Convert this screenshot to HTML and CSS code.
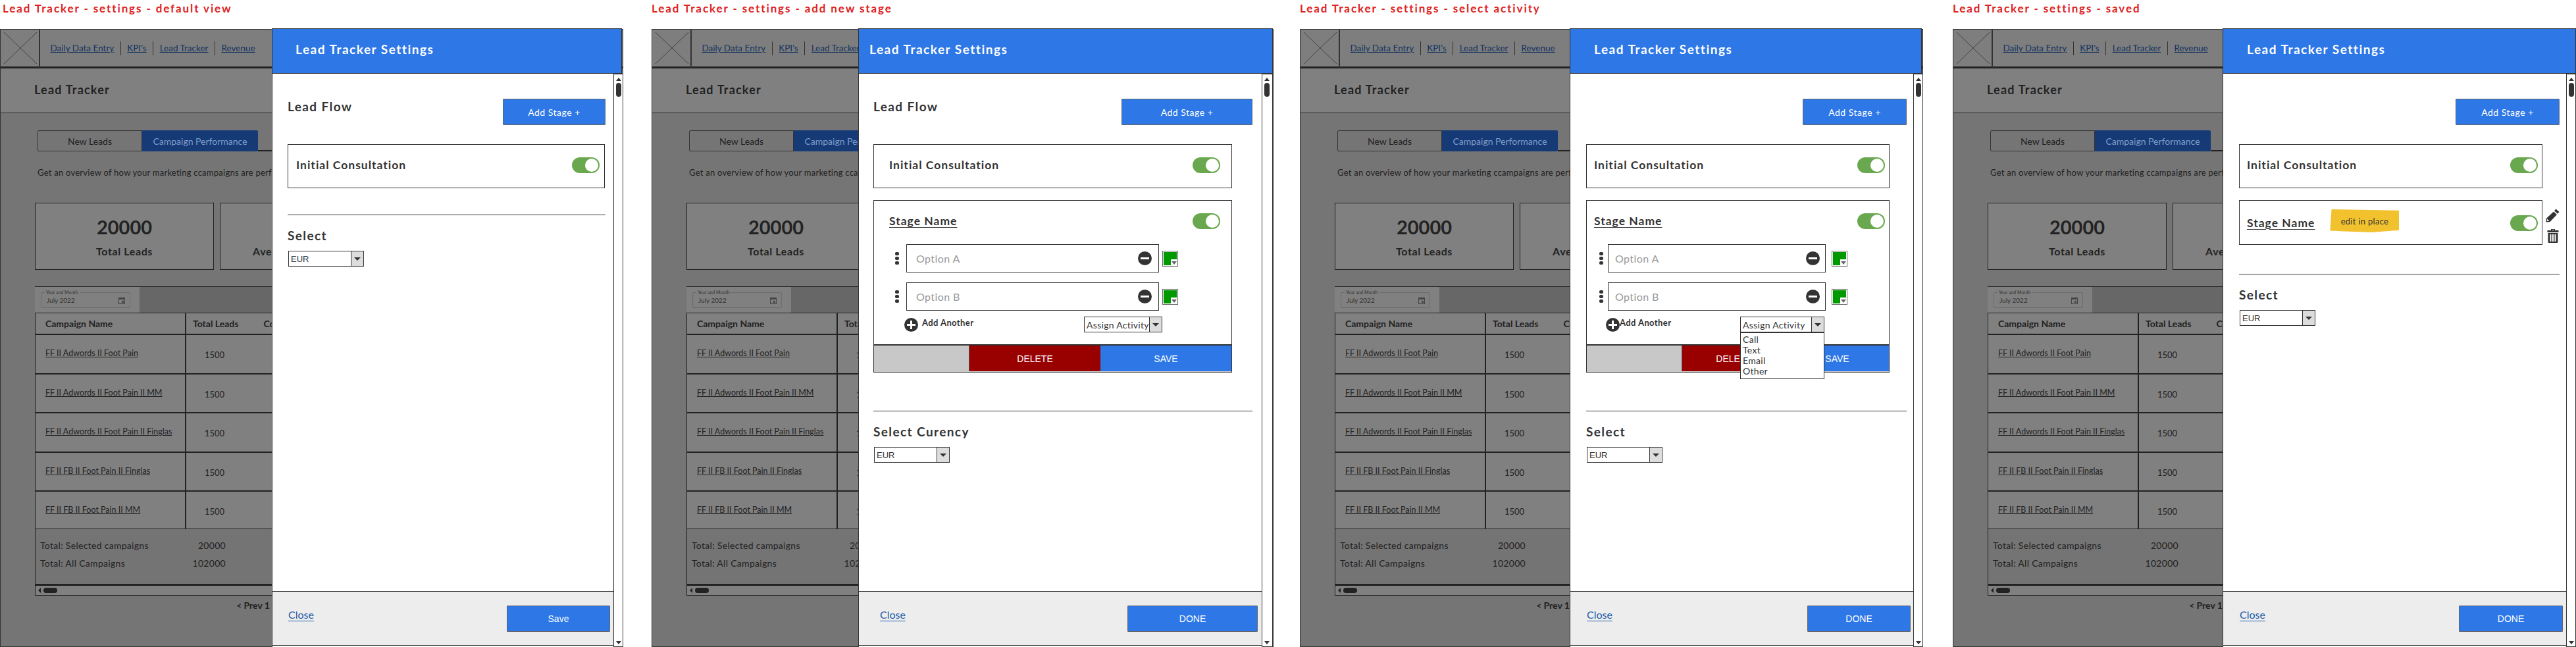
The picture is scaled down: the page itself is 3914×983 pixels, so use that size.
FILE: index.html
```html
<!DOCTYPE html>
<html lang="en">
  <head>
    <meta charset="UTF-8" />
    <title>Lead Tracker - settings</title>
    <link rel="stylesheet" href="styles.css">
  </head>
  <body>
    <div class="board">

      <!-- default view -->
      <section class="frame f1">
        <h2 class="caption">Lead Tracker - settings - default view</h2>
        <div class="window">
          <div class="wire">
            <nav class="wire-nav">
              <span class="logo"><svg viewBox="0 0 60 59" width="60" height="59"><path d="M5 5 L55 53 M55 5 L5 53" /></svg></span>
              <a class="nav-link">Daily Data Entry</a><i class="nav-sep"></i>
              <a class="nav-link">KPI's</a><i class="nav-sep"></i>
              <a class="nav-link">Lead Tracker</a><i class="nav-sep"></i>
              <a class="nav-link">Revenue</a>
            </nav>
            <h1 class="wire-title">Lead Tracker</h1>
            <main class="wire-main">
              <div class="tabs"><span class="tab">New Leads</span><span class="tab tab-on">Campaign Performance</span><span class="tab-rest"></span></div>
              <p class="intro">Get an overview of how your marketing ccampaigns are performing across every channel</p>
              <div class="stats">
                <div class="stat"><b>20000</b><span>Total Leads</span></div>
                <div class="stat"><b>120</b><span>Average Cost per Lead</span></div>
              </div>
              <div class="date-band">
                <div class="date-field"><span class="date-legend">Year and Month</span>July 2022<svg class="cal" viewBox="0 0 10 11" width="10" height="11"><path d="M0 1h10v10H0z M1 4v6h8V4z M5 6h3v3H5z" fill-rule="evenodd" /></svg></div>
              </div>
              <div class="table">
                <div class="t-row t-head"><span class="t-name">Campaign Name</span><span class="t-col"><span>Total Leads</span><span class="t-cost">Cost</span></span></div>
                <div class="t-row"><span class="t-name"><a>FF II Adwords II Foot Pain</a></span><span class="t-col t-num">1500</span></div>
                <div class="t-row"><span class="t-name"><a>FF II Adwords II Foot Pain II MM</a></span><span class="t-col t-num">1500</span></div>
                <div class="t-row"><span class="t-name"><a>FF II Adwords II Foot Pain II Finglas</a></span><span class="t-col t-num">1500</span></div>
                <div class="t-row"><span class="t-name"><a>FF II FB II Foot Pain II Finglas</a></span><span class="t-col t-num">1500</span></div>
                <div class="t-row t-last"><span class="t-name"><a>FF II FB II Foot Pain II MM</a></span><span class="t-col t-num">1500</span></div>
                <div class="totals">
                  <div class="total"><span>Total: Selected campaigns</span><span>20000</span></div>
                  <div class="total"><span>Total: All Campaigns</span><span>102000</span></div>
                </div>
                <div class="h-scroll"><i class="h-arrow"></i><i class="h-thumb"></i></div>
              </div>
              <p class="pager">&lt; Prev 1 of 5 Next &gt;</p>
            </main>
          </div>
          <aside class="modal">
            <header class="modal-head">Lead Tracker Settings</header>
            <div class="modal-mid">
              <div class="modal-body">
                <div class="flow-row">
                  <h3 class="label">Lead Flow</h3>
                  <button class="btn btn-add">Add Stage +</button>
                </div>
                <div class="stage-card"><div class="stage-top"><span class="stage-title">Initial Consultation</span><span class="toggle"></span></div></div>
                <hr class="rule" />
                <h3 class="label">Select</h3>
                <div class="drop drop-eur"><span>EUR</span><i class="drop-arrow"></i></div>
              </div>
              <div class="v-scroll"><i class="v-up"></i><i class="v-thumb"></i><i class="v-down"></i></div>
            </div>
            <footer class="modal-foot"><a class="close-link">Close</a><button class="btn btn-done">Save</button></footer>
          </aside>
        </div>
      </section>

      <!-- add new stage -->
      <section class="frame f2">
        <h2 class="caption">Lead Tracker - settings - add new stage</h2>
        <div class="window">
          <div class="wire">
            <nav class="wire-nav">
              <span class="logo"><svg viewBox="0 0 60 59" width="60" height="59"><path d="M5 5 L55 53 M55 5 L5 53" /></svg></span>
              <a class="nav-link">Daily Data Entry</a><i class="nav-sep"></i>
              <a class="nav-link">KPI's</a><i class="nav-sep"></i>
              <a class="nav-link">Lead Tracker</a><i class="nav-sep"></i>
              <a class="nav-link">Revenue</a>
            </nav>
            <h1 class="wire-title">Lead Tracker</h1>
            <main class="wire-main">
              <div class="tabs"><span class="tab">New Leads</span><span class="tab tab-on">Campaign Performance</span><span class="tab-rest"></span></div>
              <p class="intro">Get an overview of how your marketing ccampaigns are performing across every channel</p>
              <div class="stats">
                <div class="stat"><b>20000</b><span>Total Leads</span></div>
                <div class="stat"><b>120</b><span>Average Cost per Lead</span></div>
              </div>
              <div class="date-band">
                <div class="date-field"><span class="date-legend">Year and Month</span>July 2022<svg class="cal" viewBox="0 0 10 11" width="10" height="11"><path d="M0 1h10v10H0z M1 4v6h8V4z M5 6h3v3H5z" fill-rule="evenodd" /></svg></div>
              </div>
              <div class="table">
                <div class="t-row t-head"><span class="t-name">Campaign Name</span><span class="t-col"><span>Total Leads</span><span class="t-cost">Cost</span></span></div>
                <div class="t-row"><span class="t-name"><a>FF II Adwords II Foot Pain</a></span><span class="t-col t-num">1500</span></div>
                <div class="t-row"><span class="t-name"><a>FF II Adwords II Foot Pain II MM</a></span><span class="t-col t-num">1500</span></div>
                <div class="t-row"><span class="t-name"><a>FF II Adwords II Foot Pain II Finglas</a></span><span class="t-col t-num">1500</span></div>
                <div class="t-row"><span class="t-name"><a>FF II FB II Foot Pain II Finglas</a></span><span class="t-col t-num">1500</span></div>
                <div class="t-row t-last"><span class="t-name"><a>FF II FB II Foot Pain II MM</a></span><span class="t-col t-num">1500</span></div>
                <div class="totals">
                  <div class="total"><span>Total: Selected campaigns</span><span>20000</span></div>
                  <div class="total"><span>Total: All Campaigns</span><span>102000</span></div>
                </div>
                <div class="h-scroll"><i class="h-arrow"></i><i class="h-thumb"></i></div>
              </div>
              <p class="pager">&lt; Prev 1 of 5 Next &gt;</p>
            </main>
          </div>
          <aside class="modal">
            <header class="modal-head">Lead Tracker Settings</header>
            <div class="modal-mid">
              <div class="modal-body">
                <div class="flow-row">
                  <h3 class="label">Lead Flow</h3>
                  <button class="btn btn-add">Add Stage +</button>
                </div>
                <div class="stage-card"><div class="stage-top"><span class="stage-title">Initial Consultation</span><span class="toggle"></span></div></div>
                <div class="stage-card stage-open">
                  <div class="stage-top"><a class="stage-title stage-name">Stage Name</a><span class="toggle"></span></div>
                  <div class="option"><span class="dots"><i></i><i></i><i></i></span><span class="opt-input">Option A<i class="minus"></i></span><span class="swatch"><i></i></span></div>
                  <div class="option"><span class="dots"><i></i><i></i><i></i></span><span class="opt-input">Option B<i class="minus"></i></span><span class="swatch"><i></i></span></div>
                  <div class="add-row">
                    <span class="add-another"><i class="plus"></i><b>Add Another</b></span>
                    <div class="drop drop-assign"><span>Assign Activity</span><i class="drop-arrow"></i></div>
                  </div>
                  <div class="stage-bar"><span class="bar-blank"></span><button class="bar-btn bar-del">DELETE</button><button class="bar-btn bar-save">SAVE</button></div>
                </div>
                <hr class="rule" />
                <h3 class="label">Select Curency</h3>
                <div class="drop drop-eur"><span>EUR</span><i class="drop-arrow"></i></div>
              </div>
              <div class="v-scroll"><i class="v-up"></i><i class="v-thumb"></i><i class="v-down"></i></div>
            </div>
            <footer class="modal-foot"><a class="close-link">Close</a><button class="btn btn-done">DONE</button></footer>
          </aside>
        </div>
      </section>

      <!-- select activity -->
      <section class="frame f3">
        <h2 class="caption">Lead Tracker - settings - select activity</h2>
        <div class="window">
          <div class="wire">
            <nav class="wire-nav">
              <span class="logo"><svg viewBox="0 0 60 59" width="60" height="59"><path d="M5 5 L55 53 M55 5 L5 53" /></svg></span>
              <a class="nav-link">Daily Data Entry</a><i class="nav-sep"></i>
              <a class="nav-link">KPI's</a><i class="nav-sep"></i>
              <a class="nav-link">Lead Tracker</a><i class="nav-sep"></i>
              <a class="nav-link">Revenue</a>
            </nav>
            <h1 class="wire-title">Lead Tracker</h1>
            <main class="wire-main">
              <div class="tabs"><span class="tab">New Leads</span><span class="tab tab-on">Campaign Performance</span><span class="tab-rest"></span></div>
              <p class="intro">Get an overview of how your marketing ccampaigns are performing across every channel</p>
              <div class="stats">
                <div class="stat"><b>20000</b><span>Total Leads</span></div>
                <div class="stat"><b>120</b><span>Average Cost per Lead</span></div>
              </div>
              <div class="date-band">
                <div class="date-field"><span class="date-legend">Year and Month</span>July 2022<svg class="cal" viewBox="0 0 10 11" width="10" height="11"><path d="M0 1h10v10H0z M1 4v6h8V4z M5 6h3v3H5z" fill-rule="evenodd" /></svg></div>
              </div>
              <div class="table">
                <div class="t-row t-head"><span class="t-name">Campaign Name</span><span class="t-col"><span>Total Leads</span><span class="t-cost">Cost</span></span></div>
                <div class="t-row"><span class="t-name"><a>FF II Adwords II Foot Pain</a></span><span class="t-col t-num">1500</span></div>
                <div class="t-row"><span class="t-name"><a>FF II Adwords II Foot Pain II MM</a></span><span class="t-col t-num">1500</span></div>
                <div class="t-row"><span class="t-name"><a>FF II Adwords II Foot Pain II Finglas</a></span><span class="t-col t-num">1500</span></div>
                <div class="t-row"><span class="t-name"><a>FF II FB II Foot Pain II Finglas</a></span><span class="t-col t-num">1500</span></div>
                <div class="t-row t-last"><span class="t-name"><a>FF II FB II Foot Pain II MM</a></span><span class="t-col t-num">1500</span></div>
                <div class="totals">
                  <div class="total"><span>Total: Selected campaigns</span><span>20000</span></div>
                  <div class="total"><span>Total: All Campaigns</span><span>102000</span></div>
                </div>
                <div class="h-scroll"><i class="h-arrow"></i><i class="h-thumb"></i></div>
              </div>
              <p class="pager">&lt; Prev 1 of 5 Next &gt;</p>
            </main>
          </div>
          <aside class="modal">
            <header class="modal-head">Lead Tracker Settings</header>
            <div class="modal-mid">
              <div class="modal-body">
                <div class="flow-row">
                  <button class="btn btn-add">Add Stage +</button>
                </div>
                <div class="stage-card"><div class="stage-top"><span class="stage-title">Initial Consultation</span><span class="toggle"></span></div></div>
                <div class="stage-card stage-open">
                  <div class="stage-top"><a class="stage-title stage-name">Stage Name</a><span class="toggle"></span></div>
                  <div class="option"><span class="dots"><i></i><i></i><i></i></span><span class="opt-input">Option A<i class="minus"></i></span><span class="swatch"><i></i></span></div>
                  <div class="option"><span class="dots"><i></i><i></i><i></i></span><span class="opt-input">Option B<i class="minus"></i></span><span class="swatch"><i></i></span></div>
                  <div class="add-row">
                    <span class="add-another"><i class="plus"></i><b>Add Another</b></span>
                    <div class="drop drop-assign"><span>Assign Activity</span><i class="drop-arrow"></i>
                      <ul class="drop-menu"><li>Call</li><li>Text</li><li>Email</li><li>Other</li></ul>
                    </div>
                  </div>
                  <div class="stage-bar"><span class="bar-blank"></span><button class="bar-btn bar-del">DELETE</button><button class="bar-btn bar-save">SAVE</button></div>
                </div>
                <hr class="rule" />
                <h3 class="label">Select</h3>
                <div class="drop drop-eur"><span>EUR</span><i class="drop-arrow"></i></div>
              </div>
              <div class="v-scroll"><i class="v-up"></i><i class="v-thumb"></i><i class="v-down"></i></div>
            </div>
            <footer class="modal-foot"><a class="close-link">Close</a><button class="btn btn-done">DONE</button></footer>
          </aside>
        </div>
      </section>

      <!-- saved -->
      <section class="frame f4">
        <h2 class="caption">Lead Tracker - settings - saved</h2>
        <div class="window">
          <div class="wire">
            <nav class="wire-nav">
              <span class="logo"><svg viewBox="0 0 60 59" width="60" height="59"><path d="M5 5 L55 53 M55 5 L5 53" /></svg></span>
              <a class="nav-link">Daily Data Entry</a><i class="nav-sep"></i>
              <a class="nav-link">KPI's</a><i class="nav-sep"></i>
              <a class="nav-link">Lead Tracker</a><i class="nav-sep"></i>
              <a class="nav-link">Revenue</a>
            </nav>
            <h1 class="wire-title">Lead Tracker</h1>
            <main class="wire-main">
              <div class="tabs"><span class="tab">New Leads</span><span class="tab tab-on">Campaign Performance</span><span class="tab-rest"></span></div>
              <p class="intro">Get an overview of how your marketing ccampaigns are performing across every channel</p>
              <div class="stats">
                <div class="stat"><b>20000</b><span>Total Leads</span></div>
                <div class="stat"><b>120</b><span>Average Cost per Lead</span></div>
              </div>
              <div class="date-band">
                <div class="date-field"><span class="date-legend">Year and Month</span>July 2022<svg class="cal" viewBox="0 0 10 11" width="10" height="11"><path d="M0 1h10v10H0z M1 4v6h8V4z M5 6h3v3H5z" fill-rule="evenodd" /></svg></div>
              </div>
              <div class="table">
                <div class="t-row t-head"><span class="t-name">Campaign Name</span><span class="t-col"><span>Total Leads</span><span class="t-cost">Cost</span></span></div>
                <div class="t-row"><span class="t-name"><a>FF II Adwords II Foot Pain</a></span><span class="t-col t-num">1500</span></div>
                <div class="t-row"><span class="t-name"><a>FF II Adwords II Foot Pain II MM</a></span><span class="t-col t-num">1500</span></div>
                <div class="t-row"><span class="t-name"><a>FF II Adwords II Foot Pain II Finglas</a></span><span class="t-col t-num">1500</span></div>
                <div class="t-row"><span class="t-name"><a>FF II FB II Foot Pain II Finglas</a></span><span class="t-col t-num">1500</span></div>
                <div class="t-row t-last"><span class="t-name"><a>FF II FB II Foot Pain II MM</a></span><span class="t-col t-num">1500</span></div>
                <div class="totals">
                  <div class="total"><span>Total: Selected campaigns</span><span>20000</span></div>
                  <div class="total"><span>Total: All Campaigns</span><span>102000</span></div>
                </div>
                <div class="h-scroll"><i class="h-arrow"></i><i class="h-thumb"></i></div>
              </div>
              <p class="pager">&lt; Prev 1 of 5 Next &gt;</p>
            </main>
          </div>
          <aside class="modal">
            <header class="modal-head">Lead Tracker Settings</header>
            <div class="modal-mid">
              <div class="modal-body">
                <div class="flow-row">
                  <button class="btn btn-add">Add Stage +</button>
                </div>
                <div class="stage-card"><div class="stage-top"><span class="stage-title">Initial Consultation</span><span class="toggle"></span></div></div>
                <div class="saved-row">
                  <div class="stage-card"><div class="stage-top"><a class="stage-title stage-name">Stage Name</a><span class="sticky">edit in place</span><span class="toggle"></span></div></div>
                  <div class="stage-tools">
                    <svg viewBox="0 0 21 21" width="21" height="21"><path d="M15.5 0.5 L20.5 5 L18 7.8 L13 3.2 Z M12 4.4 L17 9 L6.5 20 L0.5 20.5 L1 14.8 Z M2.2 15.6 L2 19 L5.4 18.7 Z" fill-rule="evenodd" /></svg>
                    <svg viewBox="0 0 18 21" width="18" height="21"><path d="M6 0h6v2h5.5v3H0.5V2H6z M7.5 1v1h3V1z M1.5 6h15v13.5a1.5 1.5 0 0 1-1.5 1.5H3a1.5 1.5 0 0 1-1.5-1.5z M4.5 8v11h2V8z M8 8v11h2V8z M11.5 8v11h2V8z" fill-rule="evenodd" /></svg>
                  </div>
                </div>
                <hr class="rule" />
                <h3 class="label">Select</h3>
                <div class="drop drop-eur"><span>EUR</span><i class="drop-arrow"></i></div>
              </div>
              <div class="v-scroll"><i class="v-up"></i><i class="v-thumb"></i><i class="v-down"></i></div>
            </div>
            <footer class="modal-foot"><a class="close-link">Close</a><button class="btn btn-done">DONE</button></footer>
          </aside>
        </div>
      </section>

    </div>
  </body>
</html>
```
FILE: styles.css
```css
* {
  box-sizing: border-box;
}
body {
  margin: 0;
  background: white;
  font-family: Lato, "Open Sans", sans-serif;
  color: #333;
  overflow: hidden;
}
h1, h2, h3, p, ul {
  margin: 0;
  padding: 0;
  font-size: inherit;
}
button {
  font-family: inherit;
  cursor: pointer;
}
i {
  font-style: normal;
}

/* the four screens, side by side */
.board {
  display: flex;
  width: 3914px;
  height: 983px;
}
.frame {
  flex: none;
  display: flex;
  flex-direction: column;
  --scroll-w: 15px;
}
.f1 {
  width: 990px;
  --wire-w: 947px;
  --modal-left: 413px;
  --modal-w: 534px;
  --head-gap: 2px;
  --head-x: 35px;
  --body-x: 24px;
  --scroll-gap: 12px;
  --add-w: 156px;
  --card-w: 482px;
  --card-l: 12px;
  --card-r: 7px;
  --rule-gap: 40px;
  --foot-x: 24px;
  --done-w: 157px;
  --foot-r: 5px;
}
.f2 {
  width: 985px;
  --wire-w: 945px;
  --modal-left: 314px;
  --modal-w: 630px;
  --scroll-w: 17px;
  --head-gap: 0px;
  --head-x: 16px;
  --body-x: 23px;
  --scroll-gap: 14px;
  --add-w: 199px;
  --card-w: 545px;
  --card-l: 23px;
  --card-r: 17px;
  --rule-gap: 58px;
  --foot-x: 32px;
  --done-w: 198px;
  --foot-r: 6px;
  --dots-x: 32px;
  --opt-w: 384px;
  --opt-pad: 14px;
  --minus-r: 10px;
  --swatch-gap: 5px;
  --add-x: 47px;
  --add-end: 438px;
  --add-gap: 6px;
  --assign-w: 119px;
}
.f3 {
  width: 992px;
  --wire-w: 947px;
  --modal-left: 410px;
  --modal-w: 537px;
  --head-gap: 2px;
  --head-x: 36px;
  --body-x: 25px;
  --scroll-gap: 10px;
  --add-w: 158px;
  --card-w: 461px;
  --card-l: 11px;
  --card-r: 6px;
  --rule-gap: 58px;
  --foot-x: 25px;
  --done-w: 157px;
  --foot-r: 4px;
  --dots-x: 19px;
  --opt-w: 331px;
  --opt-pad: 10px;
  --minus-r: 8px;
  --swatch-gap: 9px;
  --add-x: 30px;
  --add-end: 361px;
  --add-gap: 0px;
  --assign-w: 128px;
}
.f4 {
  width: 947px;
  --wire-w: 947px;
  --modal-left: 410px;
  --modal-w: 537px;
  --head-gap: 0px;
  --head-x: 36px;
  --body-x: 25px;
  --scroll-gap: 10px;
  --add-w: 158px;
  --card-w: 461px;
  --card-l: 11px;
  --card-r: 6px;
  --rule-gap: 44px;
  --foot-x: 25px;
  --done-w: 158px;
  --foot-r: 5px;
}
.caption {
  height: 44px;
  padding-top: 3px;
  line-height: 20px;
  font-size: 17px;
  font-weight: 700;
  letter-spacing: 1.9px;
  color: #dd2222;
  white-space: nowrap;
}
.f1 .caption {
  padding-left: 4px;
}
.window {
  position: relative;
  width: var(--wire-w);
  height: 939px;
}

/* dimmed page behind the drawer */
.wire {
  width: 100%;
  height: 100%;
  overflow: hidden;
  display: flex;
  flex-direction: column;
  background: #757575;
  border: 1px solid #333;
  color: #222;
}
.wire-nav {
  flex: none;
  display: flex;
  align-items: center;
  gap: 9.5px;
  height: 59px;
  background: #7e7e7e;
  border-bottom: 3px solid #222;
  font-size: 13.5px;
}
.logo {
  flex: none;
  width: 60px;
  height: 59px;
  margin-right: 6px;
  border-right: 2px solid #333;
}
.logo svg {
  display: block;
  fill: none;
  stroke: #333;
  stroke-width: 0.8;
}
.nav-link {
  color: #14335f;
  text-decoration: underline;
  white-space: nowrap;
}
.nav-sep {
  width: 1px;
  height: 21px;
  background: #333;
}
.wire-title {
  flex: none;
  height: 68px;
  padding: 20px 0 0 51px;
  line-height: 24px;
  font-size: 18px;
  font-weight: 700;
  letter-spacing: 1.2px;
  background: #808080;
  border-bottom: 1px solid #2a2a2a;
}
.wire-main {
  flex: 1;
  min-height: 0;
  padding: 26px 0 0 52px;
  white-space: nowrap;
}
.tabs {
  display: flex;
  height: 32px;
  margin-left: 4px;
  font-size: 14px;
}
.tab {
  flex: none;
  width: 159px;
  display: flex;
  align-items: center;
  justify-content: center;
  border: 1px solid #333;
  border-radius: 2px 0 0 2px;
  background: #757575;
}
.tab-on {
  width: 176px;
  border: 0;
  border-radius: 0 2px 2px 0;
  background: #153a75;
  color: #7f9ccb;
}
.tab-rest {
  flex: 1;
  border-bottom: 2px solid #222;
}
.intro {
  margin: 22px 0 0 4px;
  line-height: 20px;
  font-size: 13px;
  letter-spacing: 0.25px;
}
.stats {
  display: flex;
  gap: 9px;
  margin-top: 36px;
}
.stat {
  flex: none;
  width: 272px;
  height: 102px;
  display: flex;
  flex-direction: column;
  align-items: center;
  background: #808080;
  border: 1px solid #222;
  padding-top: 18px;
}
.stat b {
  line-height: 36px;
  font-size: 29px;
}
.stat span {
  margin-top: 9px;
  line-height: 20px;
  font-size: 16px;
  font-weight: 700;
  letter-spacing: 0.6px;
}
.date-band {
  height: 40px;
  margin-top: 25px;
  padding: 8px 0 0 9px;
  background: linear-gradient(to right, #808080 159px, #676767 159px);
  border-top: 1px solid #222;
}
.date-field {
  position: relative;
  width: 136px;
  height: 24px;
  padding-left: 8px;
  display: flex;
  align-items: center;
  font-size: 10px;
  color: #333;
  border: 1px solid #6c6c6c;
  border-radius: 2px;
}
.date-legend {
  position: absolute;
  top: -4px;
  left: 5px;
  padding: 0 2px;
  line-height: 7px;
  font-size: 7px;
  background: #808080;
}
.cal {
  position: absolute;
  top: 6px;
  right: 7px;
  fill: #444;
}
.table {
  border-left: 1px solid #222;
  border-top: 1px solid #222;
  border-bottom: 1px solid #222;
  margin-right: -8px;
}
.t-row {
  display: flex;
  height: 59.5px;
  background: #808080;
  border-bottom: 2px solid #222;
  font-size: 12.5px;
}
.t-head {
  height: 33px;
  font-size: 14px;
  font-weight: 700;
}
.t-last {
  height: 56.5px;
  border-bottom-width: 1px;
}
.t-name {
  flex: none;
  width: 229px;
  padding: 18px 0 0 15px;
  line-height: 20px;
  border-right: 2px solid #222;
}
.t-head .t-name {
  padding-top: 6px;
}
.t-name a {
  text-decoration: underline;
}
.t-col {
  flex: 1;
  display: flex;
  padding: 6px 0 0 10px;
  line-height: 20px;
}
.t-cost {
  margin-left: 38px;
}
.t-num {
  padding: 20px 0 0 28px;
  font-size: 13px;
}
.totals {
  height: 83px;
  padding: 11px 0 0 7px;
  background: #747474;
  font-size: 14px;
  letter-spacing: 0.3px;
}
.total {
  display: flex;
  justify-content: space-between;
  width: 282px;
  line-height: 27px;
}
.h-scroll {
  height: 17px;
  display: flex;
  align-items: center;
  gap: 4px;
  padding-left: 4px;
  background: #808080;
  border-top: 3px solid #222;
}
.h-arrow {
  width: 0;
  height: 0;
  border: 4px solid transparent;
  border-left: 0;
  border-right-color: #222;
}
.h-thumb {
  width: 21px;
  height: 8px;
  border-radius: 4px;
  background: #222;
}
.pager {
  margin: 6px 0 0 306px;
  line-height: 18px;
  font-size: 14px;
  font-weight: 700;
}

/* the settings drawer, over the page */
.modal {
  position: absolute;
  top: -1px;
  left: var(--modal-left);
  width: var(--modal-w);
  height: 940px;
  display: flex;
  flex-direction: column;
}
.modal-head {
  flex: none;
  height: 69px;
  margin-right: var(--head-gap);
  padding-left: var(--head-x);
  line-height: 61px;
  font-size: 19px;
  font-weight: 700;
  letter-spacing: 1.5px;
  color: white;
  background: #2d77e6;
  border: 1px solid #333;
}
.modal-mid {
  flex: 1;
  min-height: 0;
  position: relative;
  background: white;
  border-left: 1px solid #333;
  padding-right: var(--scroll-w);
}
.modal-body {
  height: 786px;
  padding: 38px var(--scroll-gap) 0 calc(var(--body-x) - 1px);
}
.flow-row {
  display: flex;
  justify-content: flex-end;
  height: 40px;
}
.flow-row .label {
  flex: 1;
}
.label {
  line-height: 24px;
  font-size: 19px;
  font-weight: 700;
  letter-spacing: 1.4px;
  color: #333;
}
.btn {
  flex: none;
  height: 40px;
  border: 1px solid #666;
  border-radius: 1px;
  background: #2d77e6;
  color: white;
  font-size: 14px;
  padding: 0;
}
.btn-add {
  width: var(--add-w);
  letter-spacing: 0.5px;
}
.stage-card {
  width: var(--card-w);
  min-height: 67px;
  margin-top: 29px;
  padding: 0;
  border: 1px solid #333;
  background: white;
}
.stage-open,
.saved-row {
  margin-top: 18px;
}
.stage-top {
  display: flex;
  align-items: center;
  gap: 23px;
  padding: 19px var(--card-r) 0 var(--card-l);
}
.stage-title {
  line-height: 24px;
  font-size: 17.5px;
  font-weight: 700;
  letter-spacing: 1px;
  color: #333;
  white-space: nowrap;
}
.stage-name {
  text-decoration: underline;
  text-underline-offset: 3px;
  text-decoration-thickness: 1px;
}
.toggle {
  flex: none;
  margin-left: auto;
  width: 42px;
  height: 24px;
  display: flex;
  align-items: center;
  justify-content: flex-end;
  padding-right: 2px;
  border-radius: 12px;
  background: #6aa84f;
}
.toggle::after {
  content: "";
  width: 20px;
  height: 20px;
  border-radius: 50%;
  background: white;
}
.option {
  display: flex;
  align-items: center;
  height: 43px;
  margin-top: 23px;
  padding-left: var(--dots-x);
}
.option + .option {
  margin-top: 15px;
}
.dots {
  flex: none;
  width: 6px;
  margin-right: calc(var(--add-x) - var(--dots-x) - 4px);
  display: flex;
  flex-direction: column;
  gap: 2px;
}
.dots i {
  height: 5px;
  border-radius: 2px;
  background: #333;
}
.opt-input {
  flex: none;
  width: var(--opt-w);
  height: 43px;
  display: flex;
  align-items: center;
  justify-content: space-between;
  padding: 0 var(--minus-r) 0 var(--opt-pad);
  font-size: 16px;
  letter-spacing: 0.4px;
  color: #999;
  border: 1px solid #333;
}
.minus, .plus {
  position: relative;
  flex: none;
  width: 21px;
  height: 21px;
  border-radius: 50%;
  background: #333;
}
.minus::after, .plus::after, .plus::before {
  content: "";
  position: absolute;
  top: 9px;
  left: 4px;
  width: 13px;
  height: 3px;
  background: white;
}
.plus::before {
  top: 4px;
  left: 9px;
  width: 3px;
  height: 13px;
}
.swatch {
  position: relative;
  flex: none;
  width: 24px;
  height: 24px;
  margin-left: var(--swatch-gap);
  border: 1px solid #666;
  padding: 1px;
  background: #090;
  background-clip: content-box;
}
.swatch i {
  position: absolute;
  right: 1px;
  bottom: 1px;
  width: 9px;
  height: 9px;
  background: white;
}
.swatch i::after {
  content: "";
  position: absolute;
  top: 3px;
  left: 1px;
  border: 4px solid transparent;
  border-top: 5px solid #666;
  border-bottom: 0;
}
.add-row {
  display: flex;
  justify-content: space-between;
  align-items: flex-start;
  height: 42px;
  margin-top: 9px;
  padding-left: calc(var(--add-x) - 1px);
  width: var(--add-end);
}
.add-another {
  display: flex;
  gap: var(--add-gap);
  margin-top: 2px;
  font-size: 13px;
  letter-spacing: 0.4px;
  white-space: nowrap;
}
.add-another b {
  line-height: 15px;
}
.stage-bar {
  display: flex;
  height: 42px;
  background: #c8c8c8;
  border-top: 2px solid #333;
}
.bar-blank {
  flex: none;
  width: 144px;
}
.bar-btn {
  flex: 1;
  height: 39px;
  padding: 0;
  border: 0;
  color: white;
  font-family: "Liberation Sans", sans-serif;
  font-size: 14px;
}
.bar-del {
  background: #990000;
  border-left: 1px solid #555;
}
.bar-save {
  background: #2d77e6;
}
.rule {
  margin: var(--rule-gap) 0 0;
  border: 0;
  border-top: 1px solid #333;
}
.rule + .label {
  margin-top: 19px;
}
.drop {
  position: relative;
  display: flex;
  align-items: center;
  height: 24px;
  background: white;
  border: 1px solid #333;
  font-size: 14px;
  white-space: nowrap;
}
.drop > span {
  flex: 1;
  padding-left: 3px;
}
.drop-eur {
  width: 115px;
  margin-top: 11px;
  margin-left: 1px;
  font-family: "Liberation Sans", sans-serif;
  font-size: 13px;
}
.drop-assign {
  width: var(--assign-w);
  letter-spacing: 0.3px;
}
.drop-arrow {
  flex: none;
  position: relative;
  width: 19px;
  height: 100%;
  background: #ddd;
  border-left: 1px solid #333;
}
.drop-arrow::after {
  content: "";
  position: absolute;
  top: 9px;
  left: 4px;
  border: 5px solid transparent;
  border-top: 5px solid #333;
  border-bottom: 0;
}
.drop-menu {
  position: absolute;
  z-index: 2;
  top: 23px;
  left: -1px;
  right: -1px;
  height: 71px;
  padding: 2px 0 0 3px;
  list-style: none;
  background: white;
  border: 1px solid #333;
  line-height: 16px;
}
.saved-row {
  display: flex;
  align-items: flex-start;
}
.saved-row .stage-card {
  margin-top: 0;
  height: 68px;
}
.sticky {
  flex: none;
  width: 105px;
  height: 35px;
  margin-top: -6px;
  display: flex;
  align-items: center;
  justify-content: center;
  font-size: 13px;
  letter-spacing: 0.3px;
  background: #f2c12e;
  clip-path: polygon(2% 0, 100% 5%, 100% 91%, 60% 100%, 0 93%);
}
.stage-tools {
  flex: none;
  display: flex;
  flex-direction: column;
  align-items: center;
  gap: 10px;
  margin: 13px 0 0 5px;
  fill: #333;
}
.v-scroll {
  position: absolute;
  top: 0;
  right: 0;
  bottom: 0;
  width: var(--scroll-w);
  background: white;
  border: 1px solid #333;
}
.v-up, .v-down {
  position: absolute;
  left: 3px;
  border: 4px solid transparent;
}
.v-up {
  top: 5px;
  border-top: 0;
  border-bottom: 5px solid #333;
}
.v-down {
  bottom: 3px;
  border-bottom: 0;
  border-top: 5px solid #333;
}
.v-thumb {
  position: absolute;
  top: 13px;
  left: 3px;
  width: 8px;
  height: 21px;
  border-radius: 4px;
  background: #333;
}
.modal-foot {
  flex: none;
  display: flex;
  justify-content: space-between;
  align-items: flex-start;
  position: absolute;
  left: 0;
  right: var(--scroll-w);
  bottom: 2px;
  height: 83px;
  padding: 21px var(--foot-r) 0 var(--foot-x);
  background: #ededed;
  border: 1px solid #333;
  border-right: 0;
}
.close-link {
  margin-top: 4px;
  font-size: 16px;
  line-height: 20px;
  color: #1f5ba8;
  text-decoration: underline;
  text-underline-offset: 3px;
}
.btn-done {
  width: var(--done-w);
  font-family: "Liberation Sans", sans-serif;
}
```
